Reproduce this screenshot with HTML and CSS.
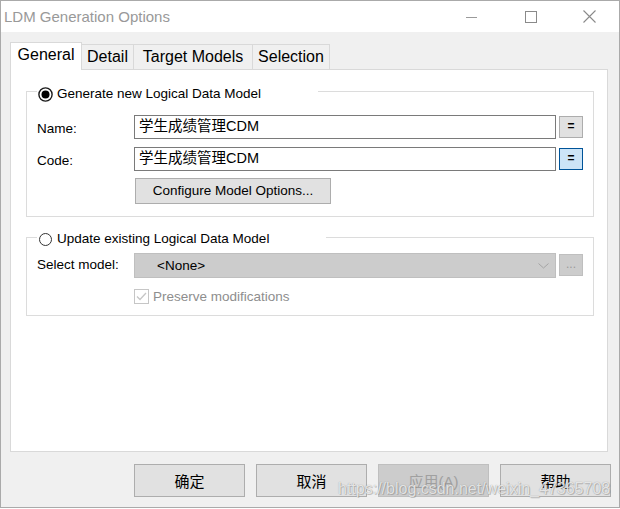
FILE: index.html
```html
<!DOCTYPE html>
<html>
<head>
<meta charset="utf-8">
<link rel="stylesheet" href="styles.css">
</head>
<body>
<div class="window">
  <div class="titlebar">
    <span class="title">LDM Generation Options</span>
    <div class="controls">
      <div class="ctl"><svg width="12" height="12" viewBox="0 0 12 12"><line x1="0" y1="6.5" x2="11" y2="6.5" stroke="#9a9a9a" stroke-width="1"/></svg></div>
      <div class="ctl"><svg width="12" height="12" viewBox="0 0 12 12"><rect x="0.5" y="0.5" width="11" height="11" fill="none" stroke="#8a8a8a" stroke-width="1"/></svg></div>
      <div class="ctl"><svg width="13" height="13" viewBox="0 0 13 13"><path d="M0.5 0.5 L12.5 12.5 M12.5 0.5 L0.5 12.5" stroke="#8a8a8a" stroke-width="1.1"/></svg></div>
    </div>
  </div>
  <div class="body">
    <div class="tabs">
      <div class="tab active w-general">General</div>
      <div class="tab w-detail">Detail</div>
      <div class="tab w-target">Target Models</div>
      <div class="tab w-selection">Selection</div>
    </div>
    <div class="panel">
      <div class="group g1">
        <div class="legend legend-1">
          <svg class="radio" width="15" height="15" viewBox="0 0 15 15"><circle cx="7.5" cy="7.5" r="6.6" fill="#fff" stroke="#1a1a1a" stroke-width="1.4"/><circle cx="7.5" cy="7.5" r="4" fill="#000"/></svg>
          <span>Generate new Logical Data Model</span>
        </div>
        <div class="row">
          <span class="label">Name:</span>
          <div class="input">学生成绩管理CDM</div>
          <div class="sbtn">=</div>
        </div>
        <div class="row row-gap">
          <span class="label">Code:</span>
          <div class="input">学生成绩管理CDM</div>
          <div class="sbtn sbtn-focus">=</div>
        </div>
        <div class="cfg">Configure Model Options...</div>
      </div>
      <div class="group g2">
        <div class="legend legend-2">
          <svg class="radio" width="15" height="15" viewBox="0 0 15 15"><circle cx="7.5" cy="7.5" r="6" fill="#fff" stroke="#333" stroke-width="1"/></svg>
          <span>Update existing Logical Data Model</span>
        </div>
        <div class="row row-sel">
          <span class="label label-sel">Select model:</span>
          <div class="combo"><span>&lt;None&gt;</span>
            <svg class="chev" width="11" height="6" viewBox="0 0 11 6"><path d="M0.5 0.5 L5.5 5 L10.5 0.5" fill="none" stroke="#a4a4a4" stroke-width="1"/></svg>
          </div>
          <div class="sbtn sbtn-dis">...</div>
        </div>
        <div class="check-row">
          <svg class="check" width="15" height="15" viewBox="0 0 15 15"><rect x="0.5" y="0.5" width="14" height="14" fill="#fff" stroke="#c6c6c6"/><path d="M3 7.5 L6 10.5 L12 4" fill="none" stroke="#c6c6c6" stroke-width="1.3"/></svg>
          <span class="check-text">Preserve modifications</span>
        </div>
      </div>
    </div>
    <div class="buttons">
      <div class="btn">确定</div>
      <div class="btn">取消</div>
      <div class="btn btn-dis">应用(A)</div>
      <div class="btn">帮助</div>
    </div>
  </div>
  <div class="watermark">https://blog.csdn.net/weixin_47365708</div>
</div>
</body>
</html>
```
FILE: styles.css
```css
html, body {
  margin: 0;
  padding: 0;
  background: #ffffff;
}

.window {
  position: relative;
  box-sizing: border-box;
  width: 620px;
  height: 508px;
  border: 1px solid #aaaaaa;
  background: #f0f0f0;
  display: flex;
  flex-direction: column;
  font-family: "Liberation Sans", Arial, "Noto Sans CJK SC", sans-serif;
  color: #000;
}

.titlebar {
  height: 31px;
  background: #ffffff;
  display: flex;
  align-items: center;
  padding-left: 3px;
}

.title {
  font-size: 15px;
  line-height: 17px;
  color: #999999;
}

.controls {
  margin-left: auto;
  display: flex;
  height: 31px;
}

.ctl {
  width: 59px;
  height: 31px;
  display: flex;
  align-items: center;
  justify-content: center;
}

.body {
  flex: 1;
  display: flex;
  flex-direction: column;
}

.tabs {
  display: flex;
  align-items: flex-start;
  margin-top: 10px;
  margin-left: 9px;
  margin-bottom: -1px;
  position: relative;
  z-index: 1;
}

.tab {
  box-sizing: border-box;
  height: 25px;
  margin-top: 2px;
  border: 1px solid #d9d9d9;
  border-bottom: none;
  background: #f0f0f0;
  font-size: 16px;
  line-height: 18px;
  padding-top: 3px;
  text-align: center;
  margin-right: -1px;
}

.tab.active {
  height: 28px;
  margin-top: 0;
  background: #ffffff;
}

.w-general { width: 72px; }
.w-detail { width: 53px; }
.w-target { width: 120px; }
.w-selection { width: 78px; }

.panel {
  box-sizing: border-box;
  width: 598px;
  height: 383px;
  margin-left: 9px;
  background: #ffffff;
  border: 1px solid #d9d9d9;
  font-size: 13.5px;
}

.group {
  box-sizing: border-box;
  width: 568px;
  margin-left: 15px;
  border: 1px solid #dcdcdc;
}

.g1 {
  margin-top: 21px;
  padding-bottom: 12px;
}

.g2 {
  margin-top: 20px;
  padding-bottom: 11px;
}

.legend {
  display: flex;
  align-items: center;
  height: 16px;
  margin-left: 10px;
  background: #ffffff;
  line-height: 16px;
}

.legend-1 { width: 281px; margin-top: -6px; }
.legend-2 { width: 289px; margin-top: -7px; }

.radio {
  margin-left: 1px;
  margin-right: 4px;
  flex: none;
}

.row {
  display: flex;
  align-items: flex-start;
  margin-top: 13px;
}

.row-gap { margin-top: 8px; }
.row-sel { margin-top: 6px; }

.label {
  width: 97px;
  margin-left: 10px;
  padding-top: 6px;
  line-height: 16px;
}

.label-sel { padding-top: 4px; }

.input {
  box-sizing: border-box;
  width: 422px;
  height: 24px;
  border: 1px solid #7a7a7a;
  padding: 1px 4px 0;
  font-size: 14.5px;
  line-height: 18px;
  background: #ffffff;
}

.sbtn {
  box-sizing: border-box;
  width: 24px;
  height: 22px;
  margin-left: 3px;
  margin-top: 1px;
  border: 1px solid #adadad;
  background: #e1e1e1;
  text-align: center;
  font-size: 12px;
  font-weight: bold;
  line-height: 19px;
}

.sbtn-focus {
  background: #cce4f7;
  border-color: #005499;
}

.sbtn-dis {
  background: #cccccc;
  border-color: #bfbfbf;
  color: #9a9a9a;
  font-weight: normal;
  line-height: 18px;
}

.cfg {
  box-sizing: border-box;
  width: 196px;
  height: 26px;
  margin-top: 7px;
  margin-left: 108px;
  border: 1px solid #adadad;
  background: #e1e1e1;
  text-align: center;
  line-height: 23px;
}

.combo {
  box-sizing: border-box;
  width: 422px;
  height: 25px;
  border: 1px solid #bfbfbf;
  background: #cccccc;
  display: flex;
  align-items: center;
  padding-left: 22px;
  padding-right: 6px;
  line-height: 21px;
}

.chev {
  margin-left: auto;
}

.check-row {
  display: flex;
  align-items: center;
  margin-top: 11px;
  margin-left: 107px;
  height: 15px;
}

.check {
  flex: none;
}

.check-text {
  margin-left: 4px;
  color: #8e8e8e;
  line-height: 16px;
}

.buttons {
  display: flex;
  justify-content: flex-end;
  gap: 11px;
  margin-top: 12px;
  margin-right: 8px;
}

.btn {
  box-sizing: border-box;
  width: 111px;
  height: 33px;
  border: 1px solid #adadad;
  background: #e1e1e1;
  display: flex;
  align-items: center;
  justify-content: center;
  font-family: "Noto Sans CJK SC", "Liberation Sans", sans-serif;
  font-size: 15px;
}

.btn-dis {
  background: #cccccc;
  border-color: #bfbfbf;
  color: #a0a0a0;
  font-family: "Liberation Sans", "Noto Sans CJK SC", sans-serif;
}

.watermark {
  position: absolute;
  left: 337px;
  top: 479px;
  font-family: "Liberation Sans", Arial, sans-serif;
  font-size: 16px;
  line-height: 18px;
  color: rgba(255, 255, 255, 0.75);
  text-shadow: 0 0 1px rgba(90, 90, 90, 0.6), 1px 1px 0 rgba(120, 120, 120, 0.35);
  pointer-events: none;
}
```
